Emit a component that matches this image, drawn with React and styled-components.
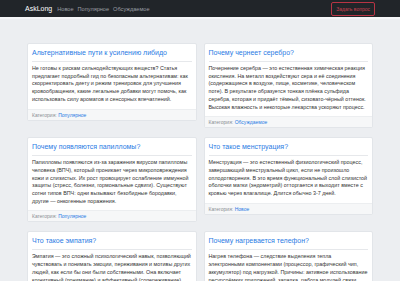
import styled, { createGlobalStyle } from 'styled-components';

const GlobalStyle = createGlobalStyle`
  body {
    margin: 0;
    background: #eceef1;
    font-family: "Liberation Sans", Arial, sans-serif;
  }
`;

const questions = [
  {
    id: 1,
    title: 'Альтернативные пути к усилению либидо',
    text: 'Не готовы к рискам сильнодействующих веществ? Статья предлагает подробный гид по безопасным альтернативам: как скорректировать диету и режим тренировок для улучшения кровообращения, какие легальные добавки могут помочь, как использовать силу ароматов и сенсорных впечатлений.',
    category: 'Популярное',
  },
  {
    id: 2,
    title: 'Почему чернеет серебро?',
    text: 'Почернение серебра — это естественная химическая реакция окисления. На металл воздействуют сера и её соединения (содержащиеся в воздухе, пище, косметике, человеческом поте). В результате образуется тонкая плёнка сульфида серебра, которая и придаёт тёмный, сизовато-чёрный оттенок. Высокая влажность и некоторые лекарства ускоряют процесс.',
    category: 'Обсуждаемое',
  },
  {
    id: 3,
    title: 'Почему появляются папилломы?',
    text: 'Папилломы появляются из-за заражения вирусом папилломы человека (ВПЧ), который проникает через микроповреждения кожи и слизистых. Их рост провоцирует ослабление иммунной защиты (стресс, болезни, гормональные сдвиги). Существуют сотни типов ВПЧ: одни вызывают безобидные бородавки, другие — онкогенные поражения.',
    category: 'Популярное',
  },
  {
    id: 4,
    title: 'Что такое менструация?',
    text: 'Менструация — это естественный физиологический процесс, завершающий менструальный цикл, если не произошло оплодотворения. В это время функциональный слой слизистой оболочки матки (эндометрий) отторгается и выходит вместе с кровью через влагалище. Длится обычно 3-7 дней.',
    category: 'Новое',
  },
  {
    id: 5,
    title: 'Что такое эмпатия?',
    text: 'Эмпатия — это сложный психологический навык, позволяющий чувствовать и понимать эмоции, переживания и мотивы других людей, как если бы они были собственными. Она включает когнитивный (понимание) и аффективный (сопереживание) компоненты.',
    category: 'Популярное',
  },
  {
    id: 6,
    title: 'Почему нагревается телефон?',
    text: 'Нагрев телефона — следствие выделения тепла электронными компонентами (процессор, графический чип, аккумулятор) под нагрузкой. Причины: активное использование ресурсоёмких приложений, зарядка, работа модулей связи (4G/5G, GPS).',
    category: 'Обсуждаемое',
  },
];

function App() {
  return (
    <>
      <GlobalStyle />
      <Navbar>
        <NavInner>
          <Brand href="#">AskLong</Brand>
          <NavLinks>
            <NavLink href="#">Новое</NavLink>
            <NavLink href="#">Популярное</NavLink>
            <NavLink href="#">Обсуждаемое</NavLink>
          </NavLinks>
          <AskButton>Задать вопрос</AskButton>
        </NavInner>
      </Navbar>

      <Main>
        {questions.map((q) => (
          <Card key={q.id}>
            <CardBody>
              <Title href="#">{q.title}</Title>
              <Divider />
              <Text>{q.text}</Text>
            </CardBody>
            <CardFooter>
              Категория: <CategoryLink href="#">{q.category}</CategoryLink>
            </CardFooter>
          </Card>
        ))}
      </Main>
    </>
  );
}

export default App;

const Navbar = styled.nav`
  background: #212529;
  height: 17px;
  border-bottom: 2px solid #f4f5f7;
`;

const NavInner = styled.div`
  width: 350px;
  margin: 0 auto;
  height: 100%;
  display: flex;
  align-items: center;
`;

const Brand = styled.a`
  color: #fff;
  font-size: 7px;
  text-decoration: none;
  margin-right: 5px;
`;

const NavLinks = styled.div`
  display: flex;
  gap: 4px;
  flex: 1;
`;

const NavLink = styled.a`
  color: #9a9ea3;
  font-size: 5.6px;
  text-decoration: none;
`;

const AskButton = styled.button`
  background: transparent;
  border: 1px solid #b83444;
  border-radius: 2px;
  color: #c8404f;
  font-family: inherit;
  font-size: 5px;
  padding: 3px 4px;
  line-height: 6px;
`;

const Main = styled.main`
  width: 346px;
  margin: 0 auto;
  padding-top: 24px;
  display: grid;
  grid-template-columns: 1fr 1fr;
  column-gap: 7px;
  row-gap: 9px;
  align-items: start;
`;

const Card = styled.div`
  background: #fff;
  border: 1px solid #e2e5e9;
  border-radius: 2px;
  overflow: hidden;
`;

const CardBody = styled.div`
  padding: 4px 4px 5px;
`;

const Title = styled.a`
  display: block;
  color: #2a7be4;
  font-size: 7px;
  line-height: 9px;
  text-decoration: none;
`;

const Divider = styled.hr`
  border: none;
  border-top: 1px solid #e6e8eb;
  margin: 4px 0 3px;
`;

const Text = styled.p`
  margin: 0;
  color: #333;
  font-size: 5.36px;
  line-height: 7.7px;
`;

const CardFooter = styled.div`
  background: #f6f7f8;
  border-top: 1px solid #eceef0;
  padding: 2px 4px;
  font-size: 5px;
  line-height: 6px;
  color: #8a8e93;
`;

const CategoryLink = styled.a`
  color: #2a7be4;
  text-decoration: none;
`;
